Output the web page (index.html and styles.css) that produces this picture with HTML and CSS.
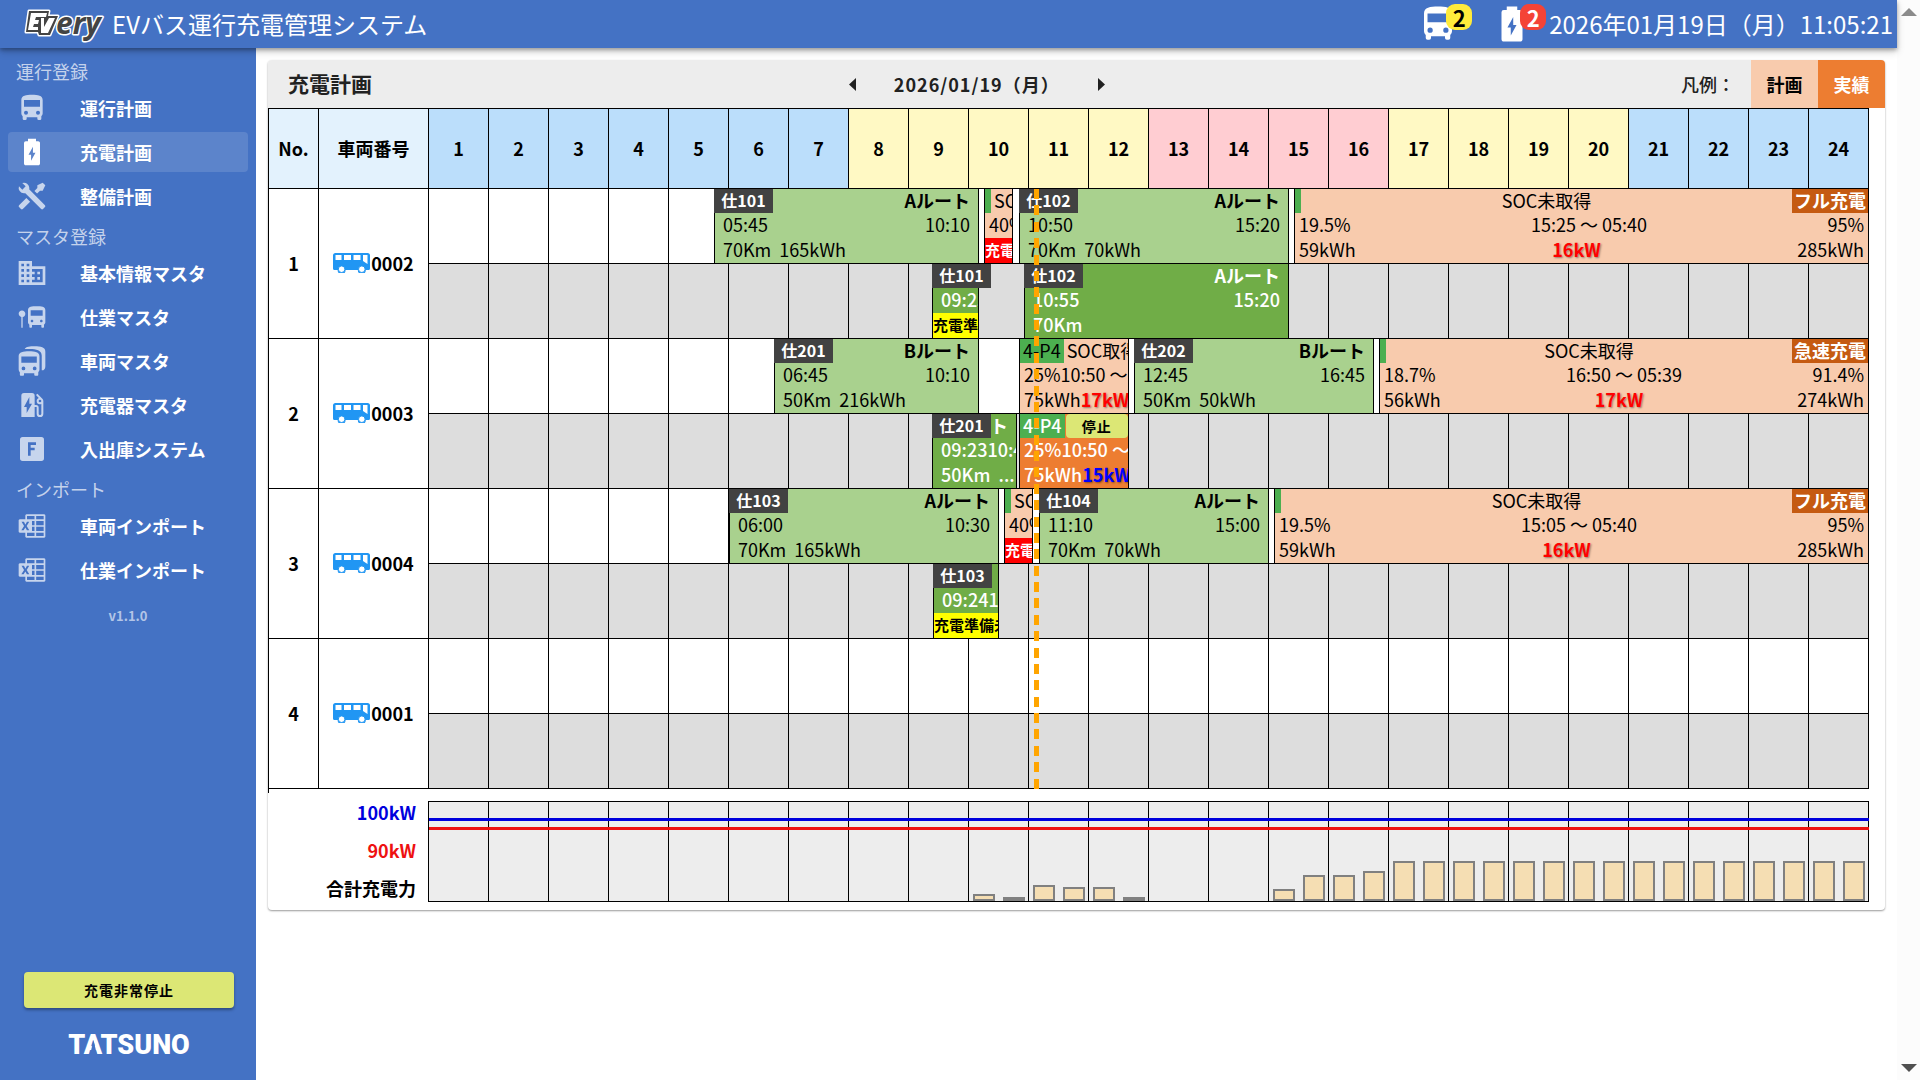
FILE: index.html
```html
<!DOCTYPE html>
<html lang="ja">
<head>
<meta charset="utf-8">
<meta name="viewport" content="width=device-width, initial-scale=1">
<title>EVバス運行充電管理システム</title>
<link rel="stylesheet" href="styles.css">
</head>
<body>
<svg class="sprite" aria-hidden="true">
  <symbol id="i-bus" viewBox="0 0 24 24"><path d="M18,11H6V6H18M16.5,17A1.5,1.5 0 0,1 15,15.5A1.5,1.5 0 0,1 16.5,14A1.5,1.5 0 0,1 18,15.5A1.5,1.5 0 0,1 16.5,17M7.5,17A1.5,1.5 0 0,1 6,15.5A1.5,1.5 0 0,1 7.5,14A1.5,1.5 0 0,1 9,15.5A1.5,1.5 0 0,1 7.5,17M4,16C4,16.88 4.39,17.67 5,18.22V20A1,1 0 0,0 6,21H7A1,1 0 0,0 8,20V19H16V20A1,1 0 0,0 17,21H18A1,1 0 0,0 19,20V18.22C19.61,17.67 20,16.88 20,16V6C20,2.5 16.42,2 12,2C7.58,2 4,2.5 4,6V16Z"/></symbol>
  <symbol id="i-battery" viewBox="0 0 24 24"><path fill-rule="evenodd" d="M16.67,4H15V2H9V4H7.33A1.33,1.33 0 0,0 6,5.33V20.67C6,21.4 6.6,22 7.33,22H16.67C17.4,22 18,21.4 18,20.67V5.33C18,4.6 17.4,4 16.67,4M11.3,18.6V14H9.4L12.7,8V12.6H14.6Z"/></symbol>
  <symbol id="i-tools" viewBox="0 0 24 24"><path d="M21.71 20.29L20.29 21.71A1 1 0 0 1 18.88 21.71L7 9.85A3.81 3.81 0 0 1 6 10A4 4 0 0 1 2.22 4.7L4.76 7.24L5.29 6.71L6.71 5.29L7.24 4.76L4.7 2.22A4 4 0 0 1 10 6A3.81 3.81 0 0 1 9.85 7L21.71 18.88A1 1 0 0 1 21.71 20.29M2.29 18.88A1 1 0 0 0 2.29 20.29L3.71 21.71A1 1 0 0 0 5.12 21.71L10.59 16.25L7.76 13.42M20 2L16 4V6L13.83 8.17L15.83 10.17L18 8H20L22 4Z"/></symbol>
  <symbol id="i-domain" viewBox="0 0 24 24"><path d="M18,15H16V17H18M18,11H16V13H18M20,19H12V17H14V15H12V13H14V11H12V9H20M10,7H8V5H10M10,11H8V9H10M10,15H8V13H10M10,19H8V17H10M6,7H4V5H6M6,11H4V9H6M6,15H4V13H6M6,19H4V17H6M12,7V3H2V21H22V7H12Z"/></symbol>
  <symbol id="i-stop" viewBox="0 0 24 24"><path d="M22 7V16C22 16.71 21.62 17.36 21 17.72V19.25C21 19.66 20.66 20 20.25 20H19.75C19.34 20 19 19.66 19 19.25V18H12V19.25C12 19.66 11.66 20 11.25 20H10.75C10.34 20 10 19.66 10 19.25V17.72C9.39 17.36 9 16.71 9 16V7C9 4 12 4 15.5 4S22 4 22 7M13 15C13 14.45 12.55 14 12 14S11 14.45 11 15 11.45 16 12 16 13 15.55 13 15M20 15C20 14.45 19.55 14 19 14S18 14.45 18 15 18.45 16 19 16 20 15.55 20 15M20 7H11V11H20V7M7 9.5C6.97 8.12 5.83 7 4.45 7.05C3.07 7.08 1.97 8.22 2 9.6C2.03 10.77 2.86 11.77 4 12V20H5V12C6.18 11.76 7 10.71 7 9.5Z"/></symbol>
  <symbol id="i-fleet" viewBox="0 0 24 24"><path fill-rule="evenodd" d="M2 8.5C2 5.3 5.4 4.7 9.8 4.7S17.6 5.3 17.6 8.5V18.4C17.6 19.2 17.2 19.9 16.7 20.4V22.3Q16.7 23 16 23H14.4Q13.7 23 13.7 22.3V21.2H6V22.3Q6 23 5.3 23H3.6Q2.9 23 2.9 22.3V20.4C2.3 19.9 2 19.2 2 18.4ZM4 8.7V13.3H15.6V8.7ZM5.6 16.2A1.4 1.4 0 1 0 5.6 19A1.4 1.4 0 1 0 5.6 16.2ZM14 16.2A1.4 1.4 0 1 0 14 19A1.4 1.4 0 1 0 14 16.2ZM6.5 3C7.5 1.3 10.5 1 14 1C18.5 1 22 1.6 22 5V16C22 17.5 21.5 18.3 20.5 19H19.3V8C19.3 4 15 3 10.5 3Z"/></symbol>
  <symbol id="i-station" viewBox="0 0 24 24"><path d="M19.77,7.23L19.78,7.22L16.06,3.5L15,4.56L17.11,6.67C16.17,7.03 15.5,7.93 15.5,9A2.5,2.5 0 0,0 18,11.5C18.36,11.5 18.69,11.42 19,11.29V18.5A1,1 0 0,1 18,19.5A1,1 0 0,1 17,18.5V14A2,2 0 0,0 15,12H14V5A2,2 0 0,0 12,3H6A2,2 0 0,0 4,5V21H14V13.5H15.5V18.5A2.5,2.5 0 0,0 18,21A2.5,2.5 0 0,0 20.5,18.5V9C20.5,8.31 20.22,7.68 19.77,7.23M18,10A1,1 0 0,1 17,9A1,1 0 0,1 18,8A1,1 0 0,1 19,9A1,1 0 0,1 18,10M8,18V13.5H6L10,6V11H12L8,18Z"/></symbol>
  <symbol id="i-fbox" viewBox="0 0 24 24"><path d="M9,7V17H11V13H14V11H11V9H15V7H9M5,3H19A2,2 0 0,1 21,5V19A2,2 0 0,1 19,21H5A2,2 0 0,1 3,19V5A2,2 0 0,1 5,3Z"/></symbol>
  <symbol id="i-excel" viewBox="0 0 24 24"><path d="M21.17 3.25Q21.5 3.25 21.76 3.5 22 3.74 22 4.08V19.92Q22 20.26 21.76 20.5 21.5 20.75 21.17 20.75H7.83Q7.5 20.75 7.24 20.5 7 20.26 7 19.92V17H2.83Q2.5 17 2.24 16.76 2 16.5 2 16.17V7.83Q2 7.5 2.24 7.24 2.5 7 2.83 7H7V4.08Q7 3.74 7.24 3.5 7.5 3.25 7.83 3.25M7 13.06L8.18 15.28H9.97L8 12.06L9.93 8.89H8.22L7.13 10.9L7.09 10.96L7.06 11.03Q6.8 10.5 6.5 9.96 6.25 9.43 5.97 8.89H4.16L6.05 12.08L4 15.28H5.78M13.88 19.5V17H8.25V19.5M13.88 15.75V12.63H12V15.75M13.88 11.38V8.25H12V11.38M13.88 7V4.5H8.25V7M20.75 19.5V17H15.13V19.5M20.75 15.75V12.63H15.13V15.75M20.75 11.38V8.25H15.13V11.38M20.75 7V4.5H15.13V7Z"/></symbol>
  <symbol id="i-coach" viewBox="0 0 37 20"><path fill-rule="evenodd" d="M2.5 0H34.5Q37 0 37 2.5V15.5Q37 17 35.5 17H32.8A4 4 0 0 1 24.8 17H12.6A4 4 0 0 1 4.6 17H1.5Q0 17 0 15.5V2.5Q0 0 2.5 0ZM2.5 2V7H8.5V2ZM11 2V7H18V2ZM20.5 2V7H27.5V2ZM30 2V8L34.5 11V2Z"/><circle cx="8.6" cy="16.2" r="3.3" fill="#fff" stroke="currentColor"/><circle cx="28.8" cy="16.2" r="3.3" fill="#fff" stroke="currentColor"/></symbol>
</svg>

<div class="app">
  <header class="appbar">
    <svg class="logo" viewBox="0 0 80 30" role="img" aria-label="EVery">
      <g stroke="#fff" stroke-width="3" fill="#fff" stroke-linejoin="round"><path d="M5 2H25L24 7H34L26 26H15L14 23H2Z"/><text class="logo-ery" x="32" y="25">ery</text></g>
      <path d="M5 2H25L24 7H34L26 26H15L14 23H2Z" fill="#444"/>
      <path d="M7 4H23L22 8H12L11 11H15L14 15H10L9 18H14V21H4ZM17 9H20L20 18L25 9H31L24 24H17Z" fill="#fff"/>
      <text class="logo-ery" x="32" y="25" fill="#444">ery</text>
    </svg>
    <h1 class="app-title">EVバス運行充電管理システム</h1>
    <div class="alerts">
      <span class="alert"><svg class="alert-icon"><use href="#i-bus"/></svg><span class="badge badge-yellow">2</span></span>
      <span class="alert"><svg class="alert-icon"><use href="#i-battery"/></svg><span class="badge badge-red">2</span></span>
    </div>
    <time class="clock">2026年01月19日（月）11:05:21</time>
  </header>

  <div class="body">
    <nav class="sidebar">
      <h2 class="nav-head">運行登録</h2>
      <a class="nav-item" href="#"><svg class="icon"><use href="#i-bus"/></svg>運行計画</a>
      <a class="nav-item active" href="#" aria-current="page"><svg class="icon"><use href="#i-battery"/></svg>充電計画</a>
      <a class="nav-item" href="#"><svg class="icon"><use href="#i-tools"/></svg>整備計画</a>
      <h2 class="nav-head">マスタ登録</h2>
      <a class="nav-item" href="#"><svg class="icon"><use href="#i-domain"/></svg>基本情報マスタ</a>
      <a class="nav-item" href="#"><svg class="icon"><use href="#i-stop"/></svg>仕業マスタ</a>
      <a class="nav-item" href="#"><svg class="icon"><use href="#i-fleet"/></svg>車両マスタ</a>
      <a class="nav-item" href="#"><svg class="icon"><use href="#i-station"/></svg>充電器マスタ</a>
      <a class="nav-item" href="#"><svg class="icon"><use href="#i-fbox"/></svg>入出庫システム</a>
      <h2 class="nav-head">インポート</h2>
      <a class="nav-item" href="#"><svg class="icon"><use href="#i-excel"/></svg>車両インポート</a>
      <a class="nav-item" href="#"><svg class="icon"><use href="#i-excel"/></svg>仕業インポート</a>
      <p class="version">v1.1.0</p>
      <div class="nav-foot">
        <button class="emergency" type="button">充電非常停止</button>
        <svg class="maker" viewBox="0 0 124 24" role="img" aria-label="TATSUNO"><text x="62" y="22" text-anchor="middle">TATSUNO</text><path class="maker-notch" d="M26.5 8L30 23H23Z"/></svg>
      </div>
    </nav>

    <main class="main">
      <section class="card">
        <div class="card-head">
          <h2 class="card-title">充電計画</h2>
          <div class="date-nav">
            <button class="arrow" type="button" aria-label="前日"><svg width="7" height="13" viewBox="0 0 7 13"><path d="M7 0V13L0 6.5Z"/></svg></button>
            <button class="date" type="button">2026/01/19（月）</button>
            <button class="arrow" type="button" aria-label="翌日"><svg width="7" height="13" viewBox="0 0 7 13"><path d="M0 0V13L7 6.5Z"/></svg></button>
          </div>
          <div class="legend"><span class="legend-name">凡例：</span><span class="legend-key key-plan">計画</span><span class="legend-key key-actual">実績</span></div>
        </div>

        <div class="schedule">
          <table class="grid">
            <colgroup><col class="c-no"><col class="c-vehicle"><col span="24"></colgroup>
            <thead>
              <tr><th class="lead">No.</th><th class="lead">車両番号</th><th class="night">1</th><th class="night">2</th><th class="night">3</th><th class="night">4</th><th class="night">5</th><th class="night">6</th><th class="night">7</th><th class="day">8</th><th class="day">9</th><th class="day">10</th><th class="day">11</th><th class="day">12</th><th class="peak">13</th><th class="peak">14</th><th class="peak">15</th><th class="peak">16</th><th class="day">17</th><th class="day">18</th><th class="day">19</th><th class="day">20</th><th class="night">21</th><th class="night">22</th><th class="night">23</th><th class="night">24</th></tr>
            </thead>
            <tbody>
              <tr>
                <th rowspan="2">1</th>
                <th rowspan="2"><span class="vehicle"><svg class="coach"><use href="#i-coach"/></svg>0002</span></th>
                <td colspan="24"><div class="lane">
                  <div class="block duty" style="--s:345;--e:610"><b class="tag">仕101</b><div class="line route">Aルート</div><div class="line"><span>05:45</span><span>10:10</span></div><div class="line amounts">70Km&nbsp; 165kWh</div></div>
                  <div class="block charge" style="--s:615;--e:644"><div class="line top"><span class="port"></span><span class="soc">SOC未取得</span></div><div class="line"><span>40%</span></div><div class="status late">充電準備未完了</div></div>
                  <div class="block duty" style="--s:650;--e:920"><b class="tag">仕102</b><div class="line route">Aルート</div><div class="line"><span>10:50</span><span>15:20</span></div><div class="line amounts">70Km&nbsp; 70kWh</div></div>
                  <div class="block charge" style="--s:925;--e:1500"><div class="line top"><span class="port"></span><span class="soc">SOC未取得</span><b class="mode">フル充電</b></div><div class="line"><span>19.5%</span><span>15:25 ～ 05:40</span><span>95%</span></div><div class="line"><span>59kWh</span><b class="power">16kW</b><span>285kWh</span></div></div>
                </div></td>
              </tr>
              <tr>
                <td colspan="24"><div class="lane result">
                  <div class="block duty" style="--s:563;--e:610"><b class="tag">仕101</b><div class="line route">Aルート</div><div class="line"><span>09:23</span><span>10:10</span></div><div class="status warn">充電準備未完了</div></div>
                  <div class="block duty" style="--s:655;--e:920"><b class="tag">仕102</b><div class="line route">Aルート</div><div class="line"><span>10:55</span><span>15:20</span></div><div class="line amounts">70Km</div></div>
                </div></td>
              </tr>
              <tr>
                <th rowspan="2">2</th>
                <th rowspan="2"><span class="vehicle"><svg class="coach"><use href="#i-coach"/></svg>0003</span></th>
                <td colspan="24"><div class="lane">
                  <div class="block duty" style="--s:405;--e:610"><b class="tag">仕201</b><div class="line route">Bルート</div><div class="line"><span>06:45</span><span>10:10</span></div><div class="line amounts">50Km&nbsp; 216kWh</div></div>
                  <div class="block charge" style="--s:650;--e:760"><div class="line top"><span class="port">4-P4</span><span class="soc">SOC取得</span></div><div class="line"><span>25%</span><span>10:50 ～ 12:40</span></div><div class="line"><span>75kWh</span><b class="power">17kW</b></div></div>
                  <div class="block duty" style="--s:765;--e:1005"><b class="tag">仕202</b><div class="line route">Bルート</div><div class="line"><span>12:45</span><span>16:45</span></div><div class="line amounts">50Km&nbsp; 50kWh</div></div>
                  <div class="block charge" style="--s:1010;--e:1500"><div class="line top"><span class="port"></span><span class="soc">SOC未取得</span><b class="mode">急速充電</b></div><div class="line"><span>18.7%</span><span>16:50 ～ 05:39</span><span>91.4%</span></div><div class="line"><span>56kWh</span><b class="power">17kW</b><span>274kWh</span></div></div>
                </div></td>
              </tr>
              <tr>
                <td colspan="24"><div class="lane result">
                  <div class="block duty" style="--s:563;--e:648"><b class="tag">仕201</b><div class="line route">Bルート</div><div class="line"><span>09:23</span><span>10:48</span></div><div class="line amounts">50Km&nbsp; ...</div></div>
                  <div class="block charge" style="--s:650;--e:760"><div class="line top"><span class="port">4-P4</span><button class="stop" type="button">停止</button></div><div class="line"><span>25%</span><span>10:50 ～ 12:40</span></div><div class="line"><span>75kWh</span><b class="power">15kW</b></div></div>
                </div></td>
              </tr>
              <tr>
                <th rowspan="2">3</th>
                <th rowspan="2"><span class="vehicle"><svg class="coach"><use href="#i-coach"/></svg>0004</span></th>
                <td colspan="24"><div class="lane">
                  <div class="block duty" style="--s:360;--e:630"><b class="tag">仕103</b><div class="line route">Aルート</div><div class="line"><span>06:00</span><span>10:30</span></div><div class="line amounts">70Km&nbsp; 165kWh</div></div>
                  <div class="block charge" style="--s:635;--e:664"><div class="line top"><span class="port"></span><span class="soc">SOC未取得</span></div><div class="line"><span>40%</span></div><div class="status late">充電準備未完了</div></div>
                  <div class="block duty" style="--s:670;--e:900"><b class="tag">仕104</b><div class="line route">Aルート</div><div class="line"><span>11:10</span><span>15:00</span></div><div class="line amounts">70Km&nbsp; 70kWh</div></div>
                  <div class="block charge" style="--s:905;--e:1500"><div class="line top"><span class="port"></span><span class="soc">SOC未取得</span><b class="mode">フル充電</b></div><div class="line"><span>19.5%</span><span>15:05 ～ 05:40</span><span>95%</span></div><div class="line"><span>59kWh</span><b class="power">16kW</b><span>285kWh</span></div></div>
                </div></td>
              </tr>
              <tr>
                <td colspan="24"><div class="lane result">
                  <div class="block duty" style="--s:564;--e:630"><b class="tag">仕103</b><div class="line route">Aルート</div><div class="line"><span>09:24</span><span>10:30</span></div><div class="status warn">充電準備未完了</div></div>
                </div></td>
              </tr>
              <tr>
                <th rowspan="2">4</th>
                <th rowspan="2"><span class="vehicle"><svg class="coach"><use href="#i-coach"/></svg>0001</span></th>
                <td colspan="24"><div class="lane"></div></td>
              </tr>
              <tr>
                <td colspan="24"><div class="lane result"></div></td>
              </tr>
            </tbody>
          </table>
          <div class="now"></div>
        </div>

        <div class="power-chart">
          <div class="axis"><span class="limit-contract">100kW</span><span class="limit-target">90kW</span><span>合計充電力</span></div>
          <div class="plot">
            <i class="bar" style="--slot:18;height:7px"></i><i class="bar" style="--slot:19;height:3px"></i><i class="bar" style="--slot:20;height:16px"></i><i class="bar" style="--slot:21;height:14px"></i><i class="bar" style="--slot:22;height:14px"></i><i class="bar" style="--slot:23;height:4px"></i><i class="bar" style="--slot:28;height:12px"></i><i class="bar" style="--slot:29;height:26px"></i><i class="bar" style="--slot:30;height:26px"></i><i class="bar" style="--slot:31;height:30px"></i><i class="bar" style="--slot:32;height:40px"></i><i class="bar" style="--slot:33;height:40px"></i><i class="bar" style="--slot:34;height:40px"></i><i class="bar" style="--slot:35;height:40px"></i><i class="bar" style="--slot:36;height:40px"></i><i class="bar" style="--slot:37;height:40px"></i><i class="bar" style="--slot:38;height:40px"></i><i class="bar" style="--slot:39;height:40px"></i><i class="bar" style="--slot:40;height:40px"></i><i class="bar" style="--slot:41;height:40px"></i><i class="bar" style="--slot:42;height:40px"></i><i class="bar" style="--slot:43;height:40px"></i><i class="bar" style="--slot:44;height:40px"></i><i class="bar" style="--slot:45;height:40px"></i><i class="bar" style="--slot:46;height:40px"></i><i class="bar" style="--slot:47;height:40px"></i>
            <i class="limit contract"></i><i class="limit target"></i>
          </div>
        </div>
      </section>
    </main>
  </div>
</div>
<div class="scroller" aria-hidden="true"><i class="up"></i><i class="down"></i></div>
</body>
</html>
```
FILE: styles.css
```css
*, *::before, *::after { box-sizing: border-box; }
body {
  margin: 0;
  display: flex;
  min-height: 100vh;
  font: 18px/22px "Noto Sans CJK JP", sans-serif;
  color: #000;
  background: #fff;
}
h1, h2, p { margin: 0; }
button { font-family: inherit; border: 0; cursor: pointer; }
.sprite { position: absolute; width: 0; height: 0; }
svg { fill: currentColor; }

.app { flex: 1; min-width: 0; display: flex; flex-direction: column; }
.appbar {
  position: relative;
  z-index: 5;
  display: flex;
  align-items: center;
  height: 48px;
  padding: 0 4px 0 24px;
  color: #fff;
  background: #4472c4;
  box-shadow: 0 2px 4px rgba(0, 0, 0, .3), 0 4px 8px rgba(0, 0, 0, .16);
}
.logo { width: 80px; height: 30px; overflow: visible; }
.logo-ery { font: italic 700 30px "Open Sans", sans-serif; }
.app-title { margin-left: 8px; font-size: 24px; font-weight: 400; line-height: 36px; }
.alerts { display: flex; gap: 32px; margin-left: auto; }
.alert { position: relative; display: flex; width: 42px; }
.alert-icon { width: 42px; height: 42px; }
.badge {
  position: absolute;
  left: 29px;
  top: 1px;
  width: 26px;
  height: 26px;
  border-radius: 9px;
  font-size: 22px;
  font-weight: 700;
  line-height: 26px;
  text-align: center;
}
.badge-yellow { color: #000; background: #ffeb3b; }
.badge-red { background: #f44336; }
.clock { margin-left: 16px; font-size: 24px; line-height: 36px; white-space: nowrap; }

.body { flex: 1; display: flex; }
.sidebar {
  flex: 0 0 256px;
  display: flex;
  flex-direction: column;
  padding: 7px 8px 24px;
  color: #fff;
  background: #4472c4;
}
.nav-head { height: 33px; padding-left: 8px; font-size: 18px; font-weight: 400; line-height: 33px; color: rgba(255, 255, 255, .7); }
.nav-item {
  display: flex;
  align-items: center;
  gap: 32px;
  height: 40px;
  margin-bottom: 4px;
  padding: 0 0 1px 8px;
  border-radius: 4px;
  font-weight: 700;
  color: #fff;
  text-decoration: none;
}
.nav-item.active { background: rgba(255, 255, 255, .13); }
.icon { width: 32px; height: 32px; color: rgba(255, 255, 255, .7); }
.active .icon { color: #fff; }
.version { margin-top: 12px; font-size: 13px; font-weight: 700; line-height: 20px; text-align: center; color: rgba(255, 255, 255, .6); }
.nav-foot { display: flex; flex-direction: column; gap: 24px; margin-top: auto; padding: 0 14px 0 16px; }
.emergency {
  height: 36px;
  border-radius: 4px;
  font-size: 14px;
  font-weight: 700;
  letter-spacing: 1px;
  background: #dce775;
  box-shadow: 0 2px 3px rgba(0, 0, 0, .35);
}
.maker { width: 124px; height: 24px; margin: 0 auto; font: 900 27px Roboto, sans-serif; overflow: visible; }
.maker-notch { fill: #4472c4; }

.main { flex: 1; min-width: 0; padding: 12px; }
.card { border-radius: 4px; background: #fff; box-shadow: 0 1px 2px rgba(0, 0, 0, .4); padding-bottom: 8px; }
.card-head {
  display: grid;
  grid-template-columns: 11fr auto 15fr;
  align-items: center;
  height: 48px;
  overflow: hidden;
  border-radius: 4px 4px 0 0;
  background: #ededed;
  color: #212121;
}
.card-title { padding: 0 0 2px 20px; font-size: 21px; font-weight: 700; line-height: 32px; }
.date-nav { display: flex; align-items: center; }
.arrow { display: flex; padding: 8px 32px; background: none; color: #212121; }
.date { padding: 0 6px; font-size: 18px; font-weight: 700; line-height: 32px; letter-spacing: 1px; background: none; color: #212121; white-space: nowrap; }
.legend { display: flex; justify-content: flex-end; font-weight: 700; line-height: 48px; }
.legend-name { margin-right: 16px; font-weight: 500; }
.legend-key { width: 67px; text-align: center; }
.key-plan { background: #f8cbad; color: #000; }
.key-actual { background: #ed7d31; color: #fff; }

.schedule { position: relative; margin-right: 16px; padding-bottom: 4px; border-left: 1px solid #000; }
.grid { width: 100%; table-layout: fixed; border-spacing: 0; border-top: 1px solid #000; }
.c-no { width: 50px; }
.c-vehicle { width: 110px; }
.grid th, .grid td { padding: 0; border-bottom: 1px solid #000; }
.grid th { padding-bottom: 2px; border-right: 1px solid #000; font-weight: 700; }
.grid thead th { height: 80px; }
.grid .lead { background: #e3f2fd; }
.grid .night { background: #bbdefb; }
.grid .day { background: #fff9c4; }
.grid .peak { background: #ffcdd2; }
.vehicle { display: flex; align-items: center; justify-content: center; gap: 1px; }
.coach { width: 37px; height: 20px; color: #2196f3; }
.lane, .plot {
  position: relative;
  background-image: linear-gradient(to left, #000 1px, transparent 1px);
  background-size: calc(100% / 24) 100%;
}
.lane { height: 74px; }
.lane.result { background-color: #ddd; }

/* Blocks are placed by minute of day; the lane runs from 01:00 to 25:00. */
.block {
  position: absolute;
  top: 0;
  bottom: 0;
  left: calc((var(--s) - 60) * 100% / 1440);
  width: calc((var(--e) - var(--s)) * 100% / 1440);
  display: grid;
  grid-template-rows: 24px 25px 25px;
  grid-template-columns: minmax(0, 1fr);
  border: solid #000;
  border-width: 0 1px;
  white-space: nowrap;
}
.line { display: flex; justify-content: space-between; padding: 0 4px; overflow-x: clip; }
.duty { background: #a9d18e; }
.duty .line { padding: 0 8px; }
.duty .route { justify-content: flex-end; font-weight: 700; }
.duty .amounts { display: block; }
.tag {
  position: absolute;
  left: -1px;
  top: 0;
  width: 59px;
  height: 24px;
  font-size: 16px;
  font-weight: 700;
  text-align: center;
  color: #fff;
  background: #424242;
}
.charge { background: #f8cbad; }
.charge .top { padding: 0; }
.port { flex: none; min-width: 6px; padding: 0 3px; background: #4caf50; }
.soc { padding: 0 3px; }
.mode { padding: 0 2px; font-weight: 700; color: #fff; background: #c55a11; }
.power { font-weight: 700; color: #f00; text-shadow: 1px 1px 2px rgba(0, 0, 0, .4); }
.status { overflow-x: clip; font-size: 15px; font-weight: 700; line-height: 24px; }
.late { color: #fff; background: #f00; }
.warn { background: #ff0; }
.result .block { color: #fff; font-weight: 500; }
.result .duty { background: #70ad47; }
.result .charge { background: #ed7d31; }
.result .power { color: #00f; }
.result .warn { color: #000; }
.stop {
  flex: 1;
  margin-left: 1px;
  padding: 0;
  border-radius: 4px;
  font-size: 14px;
  font-weight: 700;
  line-height: 24px;
  letter-spacing: 1px;
  background: #dce775;
}
.now {
  position: absolute;
  top: 81px;
  bottom: 4px;
  left: calc(160px + (100% - 160px) * 605 / 1440);
  width: 5px;
  background: repeating-linear-gradient(orange 0 10px, transparent 10px calc((100% + 6px) / 37));
}

.power-chart { display: flex; margin: 8px 16px 0 0; }
.axis { flex: 0 0 160px; display: flex; flex-direction: column; gap: 16px; padding: 0 12px 0 0; font-weight: 700; text-align: right; }
.limit-contract { color: #00d; }
.limit-target { color: #e11; }
.plot {
  flex: 1;
  height: 101px;
  border: solid #000;
  border-width: 1px 0 1px 1px;
  background-color: #ededed;
}
.bar {
  position: absolute;
  bottom: 0;
  left: calc(var(--slot) * 100% / 48 + 4px);
  width: 22px;
  border: 2px solid gray;
  background: wheat;
}
.limit { position: absolute; left: 0; right: 0; height: 3px; }
.contract { bottom: 80px; background: #00d; }
.target { bottom: 71px; background: #e11; }

.scroller { flex: 0 0 23px; display: flex; flex-direction: column; justify-content: space-between; align-items: center; padding: 8px 0; background: #fcfcfc; }
.up, .down { border: 8px solid transparent; }
.up { border-top: 0; border-bottom-color: #8b8b8b; }
.down { border-bottom: 0; border-top-color: #505050; }
```
